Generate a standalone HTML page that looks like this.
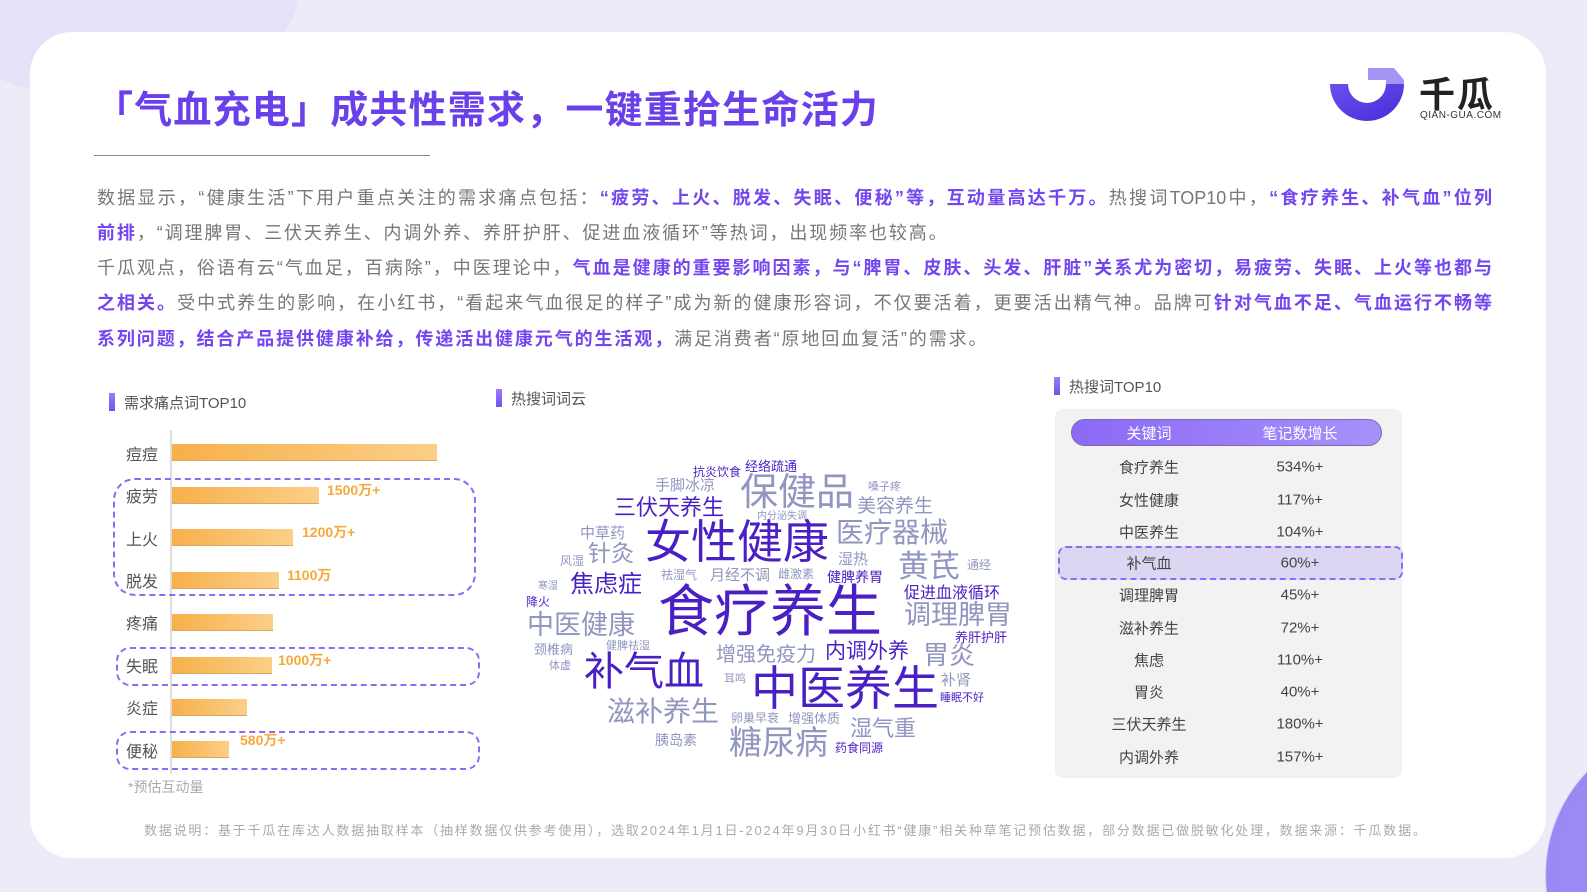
<!DOCTYPE html>
<html><head><meta charset="utf-8"><style>
*{margin:0;padding:0;box-sizing:border-box}
html,body{width:1587px;height:892px;overflow:hidden}
body{background:#eeebf8;font-family:"Liberation Sans","Noto Sans CJK SC",sans-serif}
#root{position:relative;width:1587px;height:892px;overflow:hidden;background:
radial-gradient(circle 150px at 1695px 875px,#a494f6 0,#9a88f4 99%,transparent 100%),
radial-gradient(ellipse 190px 110px at 110px -10px,#e6e1f8 99%,transparent 100%),#eeebf8}
.card{position:absolute;left:30px;top:32px;width:1516px;height:826px;background:#fff;border-radius:42px}
.a{position:absolute;white-space:nowrap}
.title{left:95px;top:79px;font-size:38px;font-weight:bold;color:#6a40ea;letter-spacing:1.2px}
.hr{position:absolute;left:94px;top:155px;width:336px;height:1px;background:#888}
.p{position:absolute;left:97px;width:1395px;font-size:18px;color:#777;height:35px;line-height:35px;white-space:nowrap;letter-spacing:1.9px}
.j{text-align:justify;text-align-last:justify;letter-spacing:0}
.p b{color:#7446f0}
.sec{font-size:15px;color:#555}
.sec:before{content:"";position:absolute;left:-15px;top:1px;width:6px;height:18px;background:linear-gradient(#9c7cf8,#7350f0)}
.lab{position:absolute;left:126px;font-size:16px;color:#555}
.bar{position:absolute;left:172px;height:16px;background:linear-gradient(90deg,#f7b04a,#fbcf88);box-shadow:0 1px 0 #d6a866}
.val{position:absolute;font-size:14px;font-weight:bold;color:#f6a93a}
.dash{position:absolute;border:2px dashed #8a6cf5;border-radius:14px}
.cloud{position:absolute;left:0;top:0;width:1px;height:1px;transform:translate(8px,10px)}
.w{position:absolute;white-space:nowrap;line-height:1;font-family:"Noto Sans CJK SC",sans-serif}
.d{color:#4a1fc4}.g{color:#9096c0}.m{color:#6f6cc8}
.tb{position:absolute;left:1055px;top:409px;width:347px;height:369px;background:#f2f2f2;border-radius:8px}
.pill{position:absolute;left:1071px;top:419px;width:311px;height:27px;border-radius:14px;background:linear-gradient(90deg,#8b6af5,#a890fb);border:1px solid #7a6bb0}
.c1,.c2{position:absolute;font-size:15px;color:#444;transform:translate(-50%,-50%);white-space:nowrap}
.c1{left:1149px}.c2{left:1300px}
</style></head><body><div id="root">
<div class="card"></div>
<div class="a title">「气血充电」成共性需求，一键重拾生命活力</div>
<div class="hr"></div>
<svg style="position:absolute;left:1328px;top:66px" width="80" height="56" viewBox="0 0 80 56">
<defs><linearGradient id="lg" x1="0" y1="0" x2="1" y2="1"><stop offset="0" stop-color="#6a4ff0"/><stop offset="1" stop-color="#4a2bd8"/></linearGradient></defs>
<path d="M2 18 A37 37 0 0 0 76 18 L58 18 A19 19 0 0 1 20 18 Z" fill="url(#lg)"/>
<path d="M40 2 L66 2 L76 14 L76 18 L58 18 L58 14 L40 14 Z" fill="#a395f5"/>
</svg>
<div class="a" style="left:1419px;top:66px;font-size:36px;color:#222;font-weight:bold;letter-spacing:2px">千瓜</div>
<div class="a" style="left:1420px;top:110px;font-size:10px;color:#333;letter-spacing:0.5px">QIAN-GUA.COM</div>

<div class="p j" style="top:181px">数据显示，“健康生活”下用户重点关注的需求痛点包括：<b>“疲劳、上火、脱发、失眠、便秘”等，互动量高达千万。</b>热搜词TOP10中，<b>“食疗养生、补气血”位列</b></div>
<div class="p" style="top:216px"><b>前排</b>，“调理脾胃、三伏天养生、内调外养、养肝护肝、促进血液循环”等热词，出现频率也较高。</div>
<div class="p j" style="top:251px">千瓜观点，俗语有云“气血足，百病除”，中医理论中，<b>气血是健康的重要影响因素，与“脾胃、皮肤、头发、肝脏”关系尤为密切，易疲劳、失眠、上火等也都与</b></div>
<div class="p j" style="top:286px"><b>之相关。</b>受中式养生的影响，在小红书，“看起来气血很足的样子”成为新的健康形容词，不仅要活着，更要活出精气神。品牌可<b>针对气血不足、气血运行不畅等</b></div>
<div class="p" style="top:322px"><b>系列问题，结合产品提供健康补给，传递活出健康元气的生活观，</b>满足消费者“原地回血复活”的需求。</div>

<div class="a sec" style="left:124px;top:392px">需求痛点词TOP10</div>
<div class="a sec" style="left:511px;top:388px">热搜词词云</div>
<div class="a sec" style="left:1069px;top:376px">热搜词TOP10</div>

<div style="position:absolute;left:170px;top:430px;width:2px;height:344px;background:#ddd"></div>
<div class="lab" style="top:441px">痘痘</div><div class="bar" style="top:444px;width:265px"></div>
<div class="lab" style="top:483px">疲劳</div><div class="bar" style="top:487px;width:147px"></div><div class="val" style="left:327px;top:480px">1500万+</div>
<div class="lab" style="top:526px">上火</div><div class="bar" style="top:529px;width:121px"></div><div class="val" style="left:302px;top:522px">1200万+</div>
<div class="lab" style="top:568px">脱发</div><div class="bar" style="top:572px;width:107px"></div><div class="val" style="left:287px;top:565px">1100万</div>
<div class="lab" style="top:610px">疼痛</div><div class="bar" style="top:614px;width:101px"></div>
<div class="lab" style="top:653px">失眠</div><div class="bar" style="top:657px;width:100px"></div><div class="val" style="left:278px;top:650px">1000万+</div>
<div class="lab" style="top:695px">炎症</div><div class="bar" style="top:699px;width:75px"></div>
<div class="lab" style="top:738px">便秘</div><div class="bar" style="top:741px;width:57px"></div><div class="val" style="left:240px;top:730px">580万+</div>
<div class="dash" style="left:113px;top:478px;width:363px;height:118px;border-radius:22px"></div>
<div class="dash" style="left:116px;top:647px;width:364px;height:39px"></div>
<div class="dash" style="left:116px;top:731px;width:364px;height:39px"></div>
<div class="a" style="left:128px;top:777px;font-size:14px;color:#aaa">*预估互动量</div>

<div class="cloud">
<div class="w d" style="left:685px;top:456px;font-size:12px">抗炎饮食</div>
<div class="w d" style="left:737px;top:449px;font-size:13px">经络疏通</div>
<div class="w g" style="left:647px;top:467px;font-size:15px">手脚冰凉</div>
<div class="w g" style="left:732px;top:460px;font-size:38px">保健品</div>
<div class="w g" style="left:860px;top:471px;font-size:11px">嗓子疼</div>
<div class="w d" style="left:606px;top:485px;font-size:22px">三伏天养生</div>
<div class="w g" style="left:849px;top:485px;font-size:19px">美容养生</div>
<div class="w g" style="left:749px;top:500px;font-size:10px">内分泌失调</div>
<div class="w g" style="left:572px;top:515px;font-size:15px">中草药</div>
<div class="w d" style="left:637px;top:506px;font-size:46px">女性健康</div>
<div class="w g" style="left:828px;top:507px;font-size:28px">医疗器械</div>
<div class="w g" style="left:580px;top:530px;font-size:23px">针灸</div>
<div class="w g" style="left:552px;top:545px;font-size:12px">风湿</div>
<div class="w g" style="left:830px;top:541px;font-size:15px">湿热</div>
<div class="w g" style="left:890px;top:538px;font-size:31px">黄芪</div>
<div class="w g" style="left:959px;top:549px;font-size:12px">通经</div>
<div class="w d" style="left:562px;top:560px;font-size:24px">焦虑症</div>
<div class="w g" style="left:653px;top:559px;font-size:12px">祛湿气</div>
<div class="w g" style="left:702px;top:557px;font-size:15px">月经不调</div>
<div class="w g" style="left:770px;top:558px;font-size:12px">雌激素</div>
<div class="w d" style="left:819px;top:560px;font-size:14px">健脾养胃</div>
<div class="w g" style="left:530px;top:570px;font-size:10px">寒湿</div>
<div class="w d" style="left:896px;top:573px;font-size:16px">促进血液循环</div>
<div class="w d" style="left:518px;top:586px;font-size:12px">降火</div>
<div class="w d" style="left:650px;top:570px;font-size:56px">食疗养生</div>
<div class="w g" style="left:896px;top:589px;font-size:27px">调理脾胃</div>
<div class="w g" style="left:519px;top:599px;font-size:27px">中医健康</div>
<div class="w d" style="left:947px;top:620px;font-size:13px">养肝护肝</div>
<div class="w g" style="left:526px;top:632px;font-size:13px">颈椎病</div>
<div class="w g" style="left:598px;top:630px;font-size:11px">健脾祛湿</div>
<div class="w g" style="left:708px;top:633px;font-size:20px">增强免疫力</div>
<div class="w d" style="left:817px;top:630px;font-size:21px">内调外养</div>
<div class="w g" style="left:915px;top:631px;font-size:26px">胃炎</div>
<div class="w g" style="left:541px;top:650px;font-size:11px">体虚</div>
<div class="w d" style="left:576px;top:638px;font-size:40px">补气血</div>
<div class="w g" style="left:716px;top:663px;font-size:11px">耳鸣</div>
<div class="w d" style="left:743px;top:651px;font-size:47px">中医养生</div>
<div class="w g" style="left:933px;top:662px;font-size:15px">补肾</div>
<div class="w d" style="left:932px;top:682px;font-size:11px">睡眠不好</div>
<div class="w g" style="left:599px;top:686px;font-size:28px">滋补养生</div>
<div class="w g" style="left:723px;top:702px;font-size:12px">卵巢早衰</div>
<div class="w g" style="left:780px;top:701px;font-size:13px">增强体质</div>
<div class="w g" style="left:842px;top:706px;font-size:22px">湿气重</div>
<div class="w g" style="left:647px;top:723px;font-size:14px">胰岛素</div>
<div class="w g" style="left:721px;top:714px;font-size:33px">糖尿病</div>
<div class="w d" style="left:827px;top:732px;font-size:12px">药食同源</div>
</div>

<div class="tb"></div>
<div class="pill"></div>
<div class="c1" style="top:433px;color:#fff">关键词</div><div class="c2" style="top:433px;color:#fff">笔记数增长</div>
<div class="dash" style="left:1058px;top:546px;width:345px;height:34px;background:#dcd6f2;border-radius:8px"></div>
<div class="c1" style="top:467px">食疗养生</div><div class="c2" style="top:467px">534%+</div>
<div class="c1" style="top:500px">女性健康</div><div class="c2" style="top:500px">117%+</div>
<div class="c1" style="top:532px">中医养生</div><div class="c2" style="top:532px">104%+</div>
<div class="c1" style="top:563px">补气血</div><div class="c2" style="top:563px">60%+</div>
<div class="c1" style="top:595px">调理脾胃</div><div class="c2" style="top:595px">45%+</div>
<div class="c1" style="top:628px">滋补养生</div><div class="c2" style="top:628px">72%+</div>
<div class="c1" style="top:660px">焦虑</div><div class="c2" style="top:660px">110%+</div>
<div class="c1" style="top:692px">胃炎</div><div class="c2" style="top:692px">40%+</div>
<div class="c1" style="top:724px">三伏天养生</div><div class="c2" style="top:724px">180%+</div>
<div class="c1" style="top:757px">内调外养</div><div class="c2" style="top:757px">157%+</div>

<div class="a" style="left:144px;top:820px;font-size:13px;color:#aaa;letter-spacing:1.8px">数据说明：基于千瓜在库达人数据抽取样本（抽样数据仅供参考使用），选取2024年1月1日-2024年9月30日小红书“健康”相关种草笔记预估数据，部分数据已做脱敏化处理，数据来源：千瓜数据。</div>
</div></body></html>
